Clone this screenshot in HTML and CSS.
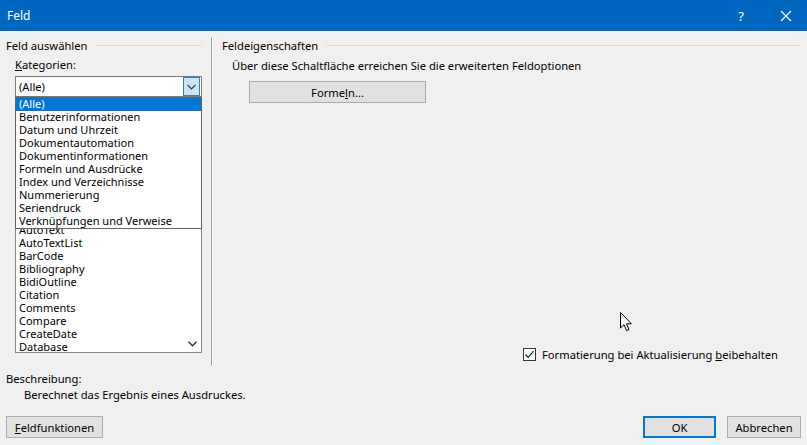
FILE: index.html
```html
<!DOCTYPE html>
<html lang="de">
<head>
    <meta charset="UTF-8">
    <title>Feld</title>
    <link rel="stylesheet" href="styles.css">
</head>
<body>
    <div class="dialog">
        <div class="titlebar">
            <span class="title">Feld</span>
            <span class="help">?</span>
            <span class="close">
                <svg width="12" height="12" viewBox="0 0 12 12"><path d="M1 1 L11 11 M11 1 L1 11" stroke="#fff" stroke-width="1.2" fill="none"/></svg>
            </span>
        </div>

        <div class="main">
            <div class="left">
                <div class="group-head">
                    <span>Feld auswählen</span>
                    <div class="rule"></div>
                </div>
                <div class="label"><u>K</u>ategorien:</div>
                <div class="combo">
                    <span class="combo-value">(Alle)</span>
                    <span class="combo-btn">
                        <svg width="9" height="6" viewBox="0 0 9 6"><path d="M0.5 0.8 L4.5 4.8 L8.5 0.8" stroke="#333" stroke-width="1.2" fill="none"/></svg>
                    </span>
                </div>
                <!-- field names list, its upper part lies under the open dropdown -->
                <div class="listbox">
                    <div class="list-items">
                        <div class="item">AutoText</div>
                        <div class="item">AutoTextList</div>
                        <div class="item">BarCode</div>
                        <div class="item">Bibliography</div>
                        <div class="item">BidiOutline</div>
                        <div class="item">Citation</div>
                        <div class="item">Comments</div>
                        <div class="item">Compare</div>
                        <div class="item">CreateDate</div>
                        <div class="item">Database</div>
                    </div>
                    <div class="scrollbar">
                        <svg width="9" height="6" viewBox="0 0 9 6"><path d="M0.5 0.8 L4.5 4.8 L8.5 0.8" stroke="#333" stroke-width="1.4" fill="none"/></svg>
                    </div>
                </div>

                <div class="dropdown">
                    <div class="item selected">(Alle)</div>
                    <div class="item">Benutzerinformationen</div>
                    <div class="item">Datum und Uhrzeit</div>
                    <div class="item">Dokumentautomation</div>
                    <div class="item">Dokumentinformationen</div>
                    <div class="item">Formeln und Ausdrücke</div>
                    <div class="item">Index und Verzeichnisse</div>
                    <div class="item">Nummerierung</div>
                    <div class="item">Seriendruck</div>
                    <div class="item">Verknüpfungen und Verweise</div>
                </div>
            </div>

            <div class="divider"></div>

            <div class="right">
                <div class="group-head">
                    <span>Feldeigenschaften</span>
                    <div class="rule"></div>
                </div>
                <div class="hint">Über diese Schaltfläche erreichen Sie die erweiterten Feldoptionen</div>
                <button class="btn formeln">Forme<u>l</u>n...</button>
                <div class="spacer"></div>
                <label class="check-row">
                    <span class="checkbox">
                        <svg width="11" height="11" viewBox="0 0 11 11"><path d="M1.5 5.5 L4.2 8.3 L9.6 2.2" stroke="#222" stroke-width="1.2" fill="none"/></svg>
                    </span>
                    <span>Formatierung bei Aktualisierung <u>b</u>eibehalten</span>
                </label>
            </div>
        </div>

        <div class="desc">
            <div>Beschreibung:</div>
            <div class="desc-text">Berechnet das Ergebnis eines Ausdruckes.</div>
        </div>

        <div class="footer">
            <button class="btn btn-fields"><u>F</u>eldfunktionen</button>
            <div class="spacer"></div>
            <button class="btn btn-ok">OK</button>
            <button class="btn btn-cancel">Abbrechen</button>
        </div>

        <svg class="cursor" width="13" height="20" viewBox="0 0 13 20">
            <path d="M0.5 0.5 L0.5 16 L4 12.6 L6.6 18.6 L9 17.6 L6.5 11.8 L11.4 11.8 Z" fill="#fff" stroke="#000" stroke-width="1"/>
        </svg>
    </div>
</body>
</html>
```

FILE: styles.css
```css
body {
    margin: 0;
    background: #F0F0F0;
    font-family: "Noto Sans", "Open Sans", sans-serif;
    font-size: 11.2px;
    color: #000;
}

.dialog {
    width: 807px;
    height: 445px;
    position: relative;
    overflow: hidden;
}

u {
    text-decoration: underline;
    text-underline-offset: 1px;
}

/* title bar */
.titlebar {
    height: 31px;
    background: #0067C0;
    color: #fff;
    display: flex;
    align-items: center;
    font-size: 12px;
}

.title {
    padding-left: 7px;
    flex: 1;
}

.help {
    width: 20px;
    text-align: center;
    margin-right: 25px;
    font-size: 13px;
}

.close {
    width: 20px;
    display: flex;
    justify-content: center;
    margin-right: 11px;
}

/* main area */
.main {
    height: 335px;
    display: flex;
}

.left {
    width: 211px;
    position: relative;
}

.right {
    flex: 1;
    display: flex;
    flex-direction: column;
    padding-left: 9px;
    padding-right: 7px;
}

.divider {
    width: 0;
    margin-top: 7px;
    border-left: 1px solid #A0A0A0;
    border-right: 1px solid #FFFFFF;
}

.group-head {
    display: flex;
    align-items: center;
    height: 13px;
    line-height: 13px;
    margin-top: 8px;
}

.left .group-head {
    padding-left: 6px;
    padding-right: 9px;
}

.rule {
    flex: 1;
    margin-left: 8px;
    border-top: 1px solid #DCDCDC;
}

.label {
    margin-left: 15px;
    margin-top: 6px;
    height: 13px;
    line-height: 13px;
}

.combo {
    margin-left: 15px;
    margin-top: 5px;
    width: 185px;
    height: 19px;
    border: 1px solid #7A7A7A;
    background: #fff;
    display: flex;
    align-items: center;
}

.combo-value {
    flex: 1;
    padding-left: 3px;
}

.combo-btn {
    width: 15px;
    height: 17px;
    margin-right: 1px;
    background: #CCE4F7;
    border: 1px solid #3C7FB1;
    display: flex;
    align-items: center;
    justify-content: center;
}

.listbox {
    margin-left: 15px;
    margin-top: 21px;
    width: 185px;
    height: 233px;
    border: 1px solid #828790;
    background: #fff;
    display: flex;
    overflow: hidden;
}

.list-items {
    flex: 1;
    padding-top: 105px;
}

.item {
    height: 13px;
    line-height: 12px;
    padding-left: 3px;
    white-space: nowrap;
    font-size: 11px;
}

.scrollbar {
    width: 17px;
    display: flex;
    align-items: flex-end;
    justify-content: center;
    padding-bottom: 5px;
}

/* open dropdown of the combo box */
.dropdown {
    position: absolute;
    top: 66px;
    left: 15px;
    width: 185px;
    border: 1px solid #646464;
    background: #fff;
}

.dropdown .selected {
    background: #0078D7;
    color: #fff;
}

/* right side */
.hint {
    margin-top: 7px;
    margin-left: 10px;
    height: 13px;
    line-height: 13px;
}

.btn {
    font-family: inherit;
    font-size: 11.2px;
    color: #000;
    background: #E1E1E1;
    border: 1px solid #ADADAD;
    height: 22px;
    padding: 0;
}

.formeln {
    margin-top: 9px;
    margin-left: 27px;
    width: 177px;
}

.spacer {
    flex: 1;
}

.check-row {
    display: flex;
    align-items: center;
    margin-left: 301px;
    margin-bottom: 5px;
    height: 14px;
}

.checkbox {
    width: 11px;
    height: 11px;
    border: 1px solid #333;
    background: #fff;
    margin-right: 6px;
    display: flex;
}

/* description */
.desc {
    padding-left: 6px;
    padding-top: 5px;
    line-height: 16px;
}

.desc-text {
    padding-left: 18px;
}

/* footer */
.footer {
    display: flex;
    padding: 13px 6px 0 6px;
    gap: 11px;
}

.btn-fields {
    width: 97px;
}

.btn-ok {
    width: 73px;
    border: 2px solid #0078D7;
}

.btn-cancel {
    width: 74px;
}

.cursor {
    position: absolute;
    left: 620px;
    top: 312px;
}
```
